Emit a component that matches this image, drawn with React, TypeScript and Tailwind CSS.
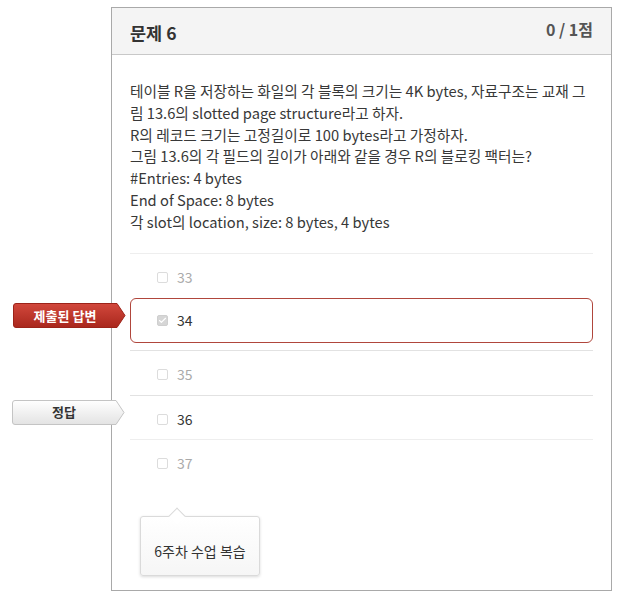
import React from "react";
import { Check } from "lucide-react";

type Choice = { value: string; picked?: boolean; answer?: boolean };

const choices: Choice[] = [
  { value: "33" },
  { value: "34", picked: true },
  { value: "35" },
  { value: "36", answer: true },
  { value: "37" },
];

const questionLines = [
  "테이블 R을 저장하는 화일의 각 블록의 크기는 4K bytes, 자료구조는 교재 그림 13.6의 slotted page structure라고 하자.",
  "R의 레코드 크기는 고정길이로 100 bytes라고 가정하자.",
  "그림 13.6의 각 필드의 길이가 아래와 같을 경우 R의 블로킹 팩터는?",
  "#Entries: 4 bytes",
  "End of Space: 8 bytes",
  "각 slot의 location, size: 8 bytes, 4 bytes",
];

function Tag({ tone, children }: { tone: "red" | "plain"; children: React.ReactNode }) {
  const red = tone === "red";
  const id = red ? "tag-red" : "tag-plain";
  return (
    <div className="relative w-[113px] h-[25px] flex items-center">
      <svg className="absolute inset-0" width="113" height="25" viewBox="0 0 113 25">
        <defs>
          <linearGradient id={id} x1="0" y1="0" x2="0" y2="1">
            {red ? (
              <>
                <stop offset="0" stopColor="#d2483c" />
                <stop offset="1" stopColor="#a9271d" />
              </>
            ) : (
              <>
                <stop offset="0" stopColor="#ffffff" />
                <stop offset="1" stopColor="#e3e3e3" />
              </>
            )}
          </linearGradient>
        </defs>
        <path
          d="M3 0.5 H104 L112 12.5 L104 24.5 H3 Q0.5 24.5 0.5 22 V3 Q0.5 0.5 3 0.5 Z"
          fill={`url(#${id})`}
          stroke={red ? "#9c2319" : "#c4c4c4"}
          strokeWidth="1"
        />
      </svg>
      <span
        className={`relative w-[104px] text-center text-[13px] font-bold ${
          red ? "text-white" : "text-[#333]"
        }`}
      >
        {children}
      </span>
    </div>
  );
}

function Box({ checked }: { checked?: boolean }) {
  return (
    <span
      className={`w-[11px] h-[11px] rounded-[2px] border flex items-center justify-center ${
        checked ? "bg-[#d6d6d6] border-[#cfcfcf]" : "bg-white border-[#dcdcdc]"
      }`}
    >
      {checked && <Check className="w-[9px] h-[9px] text-white" strokeWidth={3} />}
    </span>
  );
}

export default function App() {
  return (
    <div className="w-[621px] h-[603px] bg-white pt-[7px] font-['Noto_Sans_CJK_KR','Noto_Sans',sans-serif] text-[#333]">
      <div className="ml-[111px] w-[501px] border border-[#a9a9a9]">
        <div className="h-[47px] bg-[#f4f4f4] border-b border-[#c8c8c8] px-[18px] flex items-start justify-between">
          <h3 className="mt-[12px] text-[17.5px] font-bold text-[#333]">문제 6</h3>
          <span className="mt-[9px] text-[16px] font-bold text-[#555]">0 / 1점</span>
        </div>

        <div className="px-[18px] pt-[25px] pb-[14px]">
          <div className="text-[14.7px] leading-[21.8px] text-[#383838] pr-[2px]">
            {questionLines.map((line) => (
              <p key={line}>{line}</p>
            ))}
          </div>

          <ul className="mt-[20px]">
            {choices.map((c) =>
              c.picked ? (
                <li
                  key={c.value}
                  className="relative h-[45px] mt-[1px] mb-[7px] border border-[#b0463c] rounded-[6px] flex items-center pl-[26px] gap-[9px]"
                >
                  <div className="absolute left-[-118px] top-[4px]">
                    <Tag tone="red">제출된 답변</Tag>
                  </div>
                  <Box checked />
                  <span className="text-[14px] text-[#333]">{c.value}</span>
                </li>
              ) : (
                <li
                  key={c.value}
                  className={`relative h-[44.5px] flex items-center pl-[27px] gap-[9px] pt-[4px] ${
                    c.value === "33" || c.value === "37" ? "border-t border-[#eeeeee]" : "border-t border-[#e2e2e2]"
                  }`}
                >
                  {c.answer && (
                    <div className="absolute left-[-118px] top-[4px]">
                      <Tag tone="plain">정답</Tag>
                    </div>
                  )}
                  <Box />
                  <span className={`text-[14px] ${c.answer ? "text-[#333]" : "text-[#aaa]"}`}>
                    {c.value}
                  </span>
                </li>
              )
            )}
          </ul>

          <div className="relative mt-[32px] ml-[10px] w-[120px] h-[60px] rounded-[3px] border border-[#dadada] bg-gradient-to-b from-white to-[#f6f6f6] shadow-[0_1px_3px_rgba(0,0,0,0.15)] flex items-center justify-center pt-[11px]">
            <span className="absolute left-[30px] top-[-7px] w-[12px] h-[12px] rotate-45 bg-white border-l border-t border-[#dadada]" />
            <span className="text-[14px] text-[#333]">6주차 수업 복습</span>
          </div>
        </div>
      </div>
    </div>
  );
}
